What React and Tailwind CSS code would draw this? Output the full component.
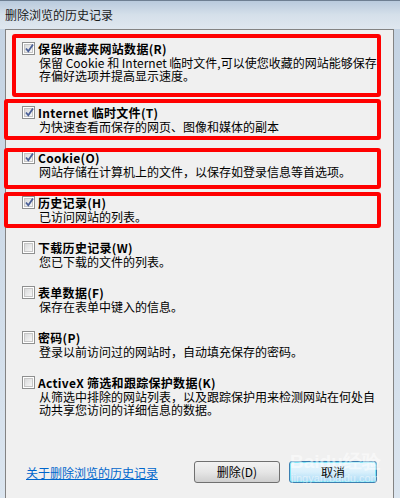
import React from 'react';

const font = { fontFamily: '"Noto Sans CJK SC", "Noto Sans", sans-serif' };

const items = [
  { label: '保留收藏夹网站数据(R)', desc: ['保留 Cookie 和 Internet 临时文件,可以使您收藏的网站能够保存', '存偏好选项并提高显示速度。'], checked: true, gap: 'mt-[12px]' },
  { label: 'Internet 临时文件(T)', desc: ['为快速查看而保存的网页、图像和媒体的副本'], checked: true, gap: 'mt-[24px]' },
  { label: 'Cookie(O)', desc: ['网站存储在计算机上的文件，以保存如登录信息等首选项。'], checked: true, gap: 'mt-[18px]' },
  { label: '历史记录(H)', desc: ['已访问网站的列表。'], checked: true, gap: 'mt-[18px]' },
  { label: '下载历史记录(W)', desc: ['您已下载的文件的列表。'], checked: false, gap: 'mt-[18px]' },
  { label: '表单数据(F)', desc: ['保存在表单中键入的信息。'], checked: false, gap: 'mt-[18px]' },
  { label: '密码(P)', desc: ['登录以前访问过的网站时，自动填充保存的密码。'], checked: false, gap: 'mt-[18px]' },
  { label: 'ActiveX 筛选和跟踪保护数据(K)', desc: ['从筛选中排除的网站列表，以及跟踪保护用来检测网站在何处自', '动共享您访问的详细信息的数据。'], checked: false, gap: 'mt-[18px]' },
];

const Checkbox = ({ checked }) => (
  <span className="relative flex h-[13px] w-[13px] shrink-0 items-center justify-center border border-[#8e8f8f] bg-white">
    <span className="h-[9px] w-[9px] border border-[#c6c6c6] bg-gradient-to-br from-[#d9dadb] to-[#f7f7f7]" />
    {checked && (
      <svg className="absolute left-[1px] top-[0px]" width="11" height="11" viewBox="0 0 11 11">
        <path d="M2 5.5 L4.3 8.3 L9 1.5" fill="none" stroke="#4a5f97" strokeWidth="1.8" />
      </svg>
    )}
  </span>
);

const Item = ({ item }) => (
  <div className={`${item.gap} flex flex-col`}>
    <div className="flex h-[13px] items-center gap-[3px] pl-[16px]">
      <Checkbox checked={item.checked} />
      <span className="text-[12px] font-bold leading-[13px] tracking-[0.3px] text-black whitespace-nowrap">{item.label}</span>
    </div>
    <div className="mt-[1px] pl-[33px]">
      {item.desc.map((line) => (
        <div key={line} className="whitespace-nowrap text-[12px] leading-[13px] text-black">
          {line}
        </div>
      ))}
    </div>
  </div>
);

const RedBox = ({ className }) => (
  <div className={`pointer-events-none absolute rounded-[3px] border-[4px] border-[#ff0000] ${className}`} />
);

export default function App() {
  return (
    <div className="relative h-[498px] w-[400px] overflow-hidden bg-gradient-to-b from-[#c3d2e2] to-[#dbe5ef]" style={font}>
      {/* title bar */}
      <div className="flex h-[29px] items-center border-t border-[#6e7f92] bg-gradient-to-b from-[#b9cadd] via-[#d5e0ea] to-[#dfe7ef] pl-[5px]">
        <span className="text-[12px] text-[#1a1a1a]">删除浏览的历史记录</span>
      </div>

      <div className="flex h-[469px] pl-[5px] pr-[6px]">
        <div className="flex flex-1 flex-col border-l border-r border-t border-[#838383] bg-[#f0f0f0]">
          <div className="w-[375px] overflow-hidden pb-[4px]">
            {items.map((item) => (
              <Item key={item.label} item={item} />
            ))}
          </div>

          <div className="mt-[41px] flex items-center pl-[20px] pr-[16px]">
            <a href="#" className="text-[12px] leading-[13px] text-[#0066cc] underline">关于删除浏览的历史记录</a>
            <div className="ml-auto flex gap-[9px]">
              <button className="h-[22px] w-[86px] rounded-[3px] border border-[#707070] bg-gradient-to-b from-[#f2f2f2] via-[#e6e6e6] to-[#cfcfcf] text-[12px] text-black">
                删除(D)
              </button>
              <button className="h-[22px] w-[88px] rounded-[3px] border border-[#3c7fb1] bg-gradient-to-b from-[#eaf6fd] via-[#d9f0fc] to-[#a7d9f5] text-[12px] text-black shadow-[inset_0_0_0_1px_#7ee6f7]">
                取消
              </button>
            </div>
          </div>
        </div>
      </div>

      {/* annotation boxes */}
      <RedBox className="left-[12px] top-[34px] h-[63px] w-[369px]" />
      <RedBox className="left-[4px] top-[99px] h-[41px] w-[377px]" />
      <RedBox className="left-[4px] top-[148px] h-[41px] w-[377px]" />
      <RedBox className="left-[4px] top-[192px] h-[36px] w-[377px]" />

      {/* watermark */}
      <div className="pointer-events-none absolute left-[290px] top-[452px] flex flex-col items-center text-white/50">
        <span className="text-[19px] font-bold leading-[20px]" style={{ fontFamily: '"Liberation Sans", sans-serif' }}>Baidu经验</span>
        <span className="text-[11px] leading-[12px]" style={{ fontFamily: '"Liberation Sans", sans-serif' }}>jingyan.baidu.com</span>
      </div>
    </div>
  );
}
